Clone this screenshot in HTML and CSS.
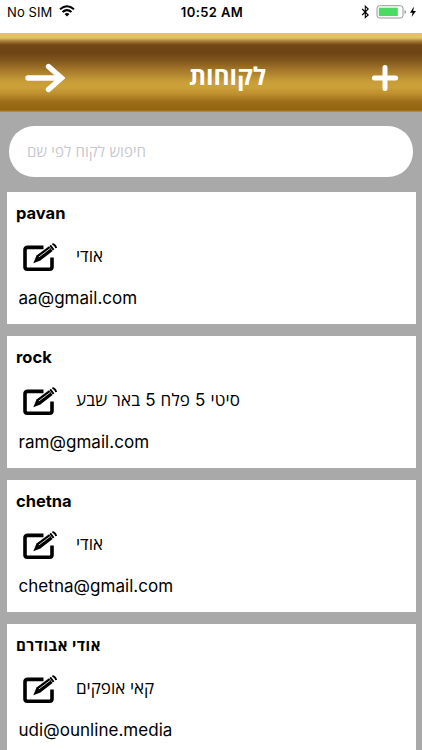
FILE: index.html
```
<!DOCTYPE html>
<html lang="he">
<head>
	<meta charset="UTF-8">
	<title>לקוחות</title>
	<link rel="stylesheet" href="styles.css">
</head>
<body>
	<svg class="defs">
		<symbol id="edit" viewBox="0 0 36 30">
			<path d="M21.500 5.400H5.500Q3 5.400 3 7.900V24.700Q3 27.300 5.500 27.300H27.500Q30 27.300 30 24.700V15.500" fill="none" stroke="#000" stroke-width="3.600"/>
			<path d="M11.300 21.300L14.500 13.500L27 4.200L30.600 9L18.400 18.600Z"/>
			<path d="M16.800 15L28 6.600" fill="none" stroke="#fff" stroke-width=".8"/>
			<path d="M28.200 3.400L31.600 7.800M30.400 1.800Q33.500 2.600 34.200 6" fill="none" stroke="#000" stroke-width="1.900"/>
		</symbol>
	</svg>

	<div class="status">
		<div class="carrier">
			<span>No SIM</span>
			<svg class="wifi" width="16" height="12" viewBox="0 0 16 12">
				<path d="M1 4.300Q8 -1.900 15 4.300M3.500 7.100Q8 3.200 12.500 7.100" fill="none" stroke="#000" stroke-width="2"/>
				<path d="M5.500 9Q8 7 10.500 9L8 11.600Z"/>
			</svg>
		</div>
		<div class="time">10:52 AM</div>
		<div class="power">
			<svg width="55" height="14" viewBox="0 0 55 14">
				<path d="M1.200 4L7.200 10L4.300 12.500V1.200L7.200 4L1.200 10" fill="none" stroke="#000" stroke-width="1.100"/>
				<rect x="16" y=".7" width="26" height="12.300" rx="2.500" fill="#fff" stroke="#969696"/>
				<rect x="17.800" y="2.700" width="19" height="8.300" fill="#4cd964"/>
				<path d="M43.500 5V9Q45.100 8.600 45.100 7T43.500 5Z" fill="#969696"/>
				<path d="M53 1.500L49 7.700H51.600L50.600 12L55 6H52.200Z"/>
			</svg>
		</div>
	</div>

	<div class="header">
		<svg class="back" width="40" height="30" viewBox="0 0 40 30">
			<path d="M3 15H36M23.500 3.500L36.500 15L23.500 26.500" fill="none" stroke="#fff" stroke-width="5.400" stroke-linecap="round"/>
		</svg>
		<h1>לקוחות</h1>
		<svg class="add" width="28" height="28" viewBox="0 0 28 28">
			<path d="M3.400 14H24.600M14 3.400V24.600" fill="none" stroke="#fff" stroke-width="5" stroke-linecap="round"/>
		</svg>
	</div>

	<div class="search"><input type="text" dir="auto" placeholder="חיפוש לקוח לפי שם"></div>

	<div class="list">
		<div class="card">
			<h2>pavan</h2>
			<div class="row"><svg class="edit"><use href="#edit"/></svg><span dir="rtl">אודי</span></div>
			<p>aa@gmail.com</p>
		</div>
		<div class="card">
			<h2>rock</h2>
			<div class="row"><svg class="edit"><use href="#edit"/></svg><span class="long" dir="rtl">סיטי 5 פלח 5 באר שבע</span></div>
			<p>ram@gmail.com</p>
		</div>
		<div class="card">
			<h2>chetna</h2>
			<div class="row"><svg class="edit"><use href="#edit"/></svg><span dir="rtl">אודי</span></div>
			<p>chetna@gmail.com</p>
		</div>
		<div class="card">
			<h2 class="he"><span dir="rtl">אודי אבודרם</span></h2>
			<div class="row"><svg class="edit"><use href="#edit"/></svg><span dir="rtl">קאי אופקים</span></div>
			<p>udi@ounline.media</p>
		</div>
	</div>
</body>
</html>
```
FILE: styles.css
```
*{box-sizing: border-box;}
body{margin: 0;height: 750px;overflow: hidden;background: #a9a9a9;color: #000;
	font-family: Inter,"Open Sans","DejaVu Sans",sans-serif;}
h1,h2,p{margin: 0;}
.defs{display: none;}

.status{display: grid;grid-template-columns: 1fr auto 1fr;height: 33px;padding: 5px 6px 0 7px;
	background: #fff;font-size: 13px;line-height: 15px;}
.carrier{display: flex;gap: 7px;letter-spacing: .1px;}
.time{padding-left: 1px;font-weight: 600;letter-spacing: .4px;}
.power{display: flex;justify-content: flex-end;}

.header{display: grid;grid-template-columns: 40px 1fr 28px;align-items: center;height: 78.500px;
	padding: 12px 23px 0 25px;
	background: linear-gradient(#e2c468 0,#dfc067 5px,#a87f3a 8px,#704617 12px,#6f4416 20px,
		#7f551d 27px,#a87b2b 38px,#c79b37 48px,#cda13a 54px,#bd8f2e 61px,#9c6d1a 69px,#94640f 77px,#b58a3b 78.500px);}
.header h1{padding: 0 0 4px 19px;color: #fff;font-size: 24.500px;line-height: 30px;font-weight: 700;text-align: center;}

.search{padding: 14.500px 9px 0;}
.search input{display: block;width: 100%;height: 51px;padding: 0 18px;border: 0;border-radius: 25px;
	background: #fff;font: 15px Inter,"Open Sans","DejaVu Sans",sans-serif;text-align: left;letter-spacing: .05px;}
.search input::placeholder{color: #c7c7cd;}

.list{display: grid;gap: 12px;padding: 15.400px 6px 0 7px;}
.card{height: 132px;padding: 10px 9px;background: #fff;}
.card h2{font-size: 16.500px;line-height: 23px;font-weight: 700;}
.card h2.he{font-size: 15px;letter-spacing: .5px;}
.row{display: flex;align-items: center;height: 44px;padding: 16px 0 0 6px;gap: 18px;font-size: 17px;}
.row .long{letter-spacing: .16px;}
.edit{width: 36px;height: 30px;position: relative;top: 2px;}
.card p{padding: 18px 0 0 2.500px;font-size: 17px;line-height: 22px;letter-spacing: .04px;}
```
